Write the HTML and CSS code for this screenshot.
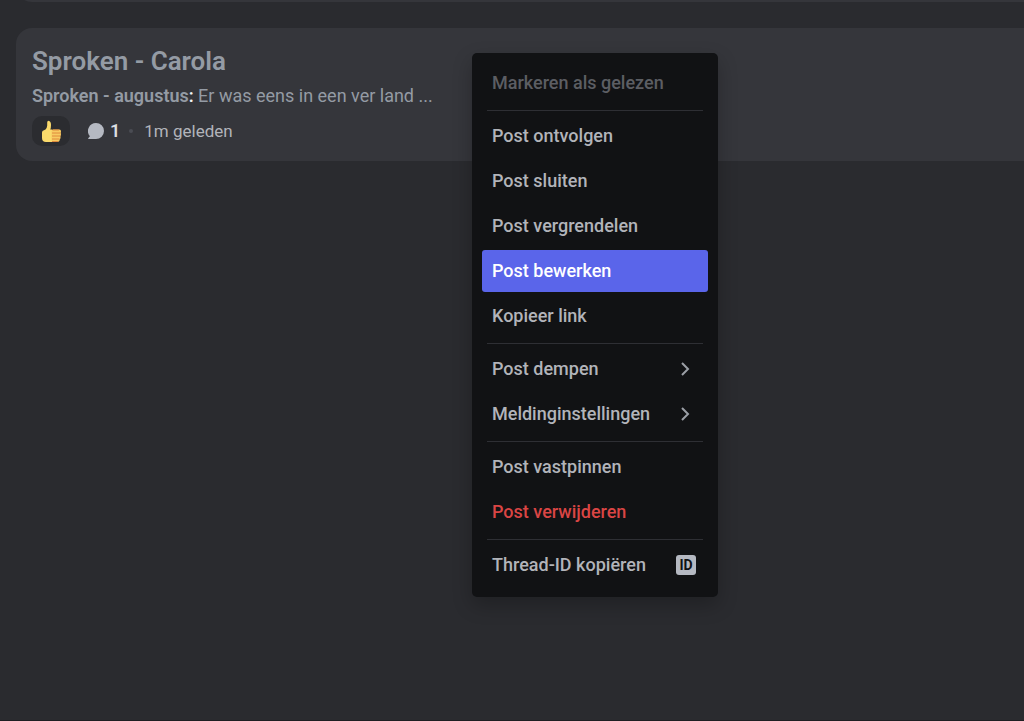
FILE: index.html
```
<!DOCTYPE html>
<html lang="nl">
<head>
  <meta charset="UTF-8">
  <meta name="viewport" content="width=device-width, initial-scale=1.0">
  <title>Sproken</title>
  <link rel="stylesheet" href="styles.css">
</head>
<body>
<main class="post-list">
  <div class="post post-previous"></div>

  <article class="post">
    <h3 class="post-title">Sproken - Carola</h3>
    <p class="post-message"><strong class="author">Sproken - augustus<span class="colon">:</span></strong> Er was eens in een ver land ...</p>
    <div class="post-footer">
      <button class="reaction" type="button" aria-label="Duim omhoog">
        <svg width="22" height="22" viewBox="0 0 22 22" aria-hidden="true">
          <path fill="#fbdb6c" d="M2 12.500 Q2 10.600 4 10.300 L5.500 9.600 Q7 8.200 7.200 5.600 V2.400 Q7.200 .8 8.500 .8 Q11 1.100 11 5 Q11 8 10.300 9.500 H12 V22 H6 Q2 22 2 18z"/>
          <path fill="#f7cb62" d="M13 9.500 H19.500 Q21 9.500 21 11.500 Q21 12.300 20.700 12.800 Q21.300 13.800 20.800 15.300 Q20.800 16 20.400 16.300 Q20.800 17.400 20.300 18.700 L19.800 19.300 Q19.800 22 18 22 H13 Q11.500 22 11.500 20 V11.500 Q11.500 9.500 13 9.500z"/>
          <path fill="none" stroke="#e08a3c" d="M12.500 10 H19 M12 13 H20.500 M12 16 H20.500 M12 19 H19.500 M12 21.500 H18"/>
        </svg>
      </button>
      <span class="replies">
        <svg width="16" height="16" viewBox="0 0 16 16" aria-hidden="true">
          <path fill="#b5b9c2" d="M8 0 A8 8 0 1 1 8 16 H.7 Q-.4 15.800 .4 15 L1.900 13.200 A8 8 0 0 1 8 0z"/>
        </svg>
        <span class="count">1</span>
      </span>
      <span class="dot"></span>
      <time class="ago">1m geleden</time>
    </div>
  </article>
</main>

<div class="menu" role="menu">
  <div class="group" role="group">
    <button class="item" type="button" role="menuitem" disabled>Markeren als gelezen</button>
  </div>
  <hr class="separator">
  <div class="group" role="group">
    <button class="item" type="button" role="menuitem">Post ontvolgen</button>
    <button class="item" type="button" role="menuitem">Post sluiten</button>
    <button class="item" type="button" role="menuitem">Post vergrendelen</button>
    <button class="item item-active" type="button" role="menuitem">Post bewerken</button>
    <button class="item" type="button" role="menuitem">Kopieer link</button>
  </div>
  <hr class="separator">
  <div class="group" role="group">
    <button class="item" type="button" role="menuitem" aria-haspopup="true">
      Post dempen
      <svg class="chevron" width="20" height="20" viewBox="0 0 20 20" aria-hidden="true"><path d="M7 4 L13 10 L7 16"/></svg>
    </button>
    <button class="item" type="button" role="menuitem" aria-haspopup="true">
      Meldinginstellingen
      <svg class="chevron" width="20" height="20" viewBox="0 0 20 20" aria-hidden="true"><path d="M7 4 L13 10 L7 16"/></svg>
    </button>
  </div>
  <hr class="separator">
  <div class="group" role="group">
    <button class="item" type="button" role="menuitem">Post vastpinnen</button>
    <button class="item item-danger" type="button" role="menuitem">Post verwijderen</button>
  </div>
  <hr class="separator">
  <div class="group" role="group">
    <button class="item" type="button" role="menuitem">
      Thread-ID kopiëren
      <span class="id-badge" aria-hidden="true">ID</span>
    </button>
  </div>
</div>
</body>
</html>
```
FILE: styles.css
```
* {
  box-sizing: border-box;
}
body {
  margin: 0;
  min-height: 100vh;
  overflow: hidden;
  font-family: Roboto, sans-serif;
  font-size: 18px;
  line-height: 24px;
  color: #b2b4ba;
  background-color: #2a2b2f;
  border-bottom: 1px solid #1e1f22;
}
button {
  font: inherit;
  color: inherit;
  border: none;
  cursor: pointer;
}
.post-list {
  display: flex;
  flex-direction: column;
  gap: 26px;
  margin: -30px -16px 0 16px;
}
.post {
  padding: 19px 16px 15px;
  border-radius: 16px;
  background-color: #35363b;
}
.post-previous {
  height: 32px;
  padding: 0;
}
.post-title {
  margin: 0;
  font-size: 26px;
  line-height: 28px;
  font-weight: 600;
  color: #949ba4;
}
.post-message {
  margin: 9px 0 8px;
  color: #949ba4;
}
.author {
  font-weight: 600;
}
.colon {
  color: #f2f3f5;
}
.post-footer {
  display: flex;
  align-items: center;
}
.reaction {
  display: flex;
  padding: 4px 8px;
  border-radius: 10px;
  background-color: #2b2c30;
}
.replies {
  display: flex;
  align-items: center;
  gap: 6px;
  margin-left: 18px;
}
.count {
  font-weight: 600;
  color: #dbdee1;
}
.dot {
  width: 4px;
  height: 4px;
  margin: 0 11px 0 9px;
  border-radius: 50%;
  background-color: #4a4c53;
}
.ago {
  font-size: 17px;
}

/* context menu */
.menu {
  position: absolute;
  top: 53px;
  left: 472px;
  width: 246px;
  padding: 9px 10px 11px;
  border-radius: 5px;
  background-color: #111214;
  box-shadow: 0 8px 20px rgba(0,0,0,0.24);
}
.group {
  display: grid;
  gap: 3px;
}
.item {
  display: flex;
  align-items: center;
  justify-content: space-between;
  height: 42px;
  padding: 0 10px;
  border-radius: 3px;
  background-color: transparent;
  font-weight: 500;
  text-align: left;
  white-space: nowrap;
}
.item:disabled {
  color: #5c5e63;
  cursor: default;
}
.item-active,
.item:not(:disabled):hover {
  color: white;
  background-color: #5a65ea;
}
.item-danger {
  color: #da4544;
}
.separator {
  height: 1px;
  margin: 6px 5px 4px;
  border: none;
  background-color: #2e2f34;
}
.chevron {
  margin-right: 3px;
  fill: none;
  stroke: #9b9fa6;
  stroke-width: 2;
}
.id-badge {
  width: 20px;
  height: 20px;
  margin-right: 2px;
  border-radius: 3px;
  background-color: #b5b9c2;
  color: #111214;
  font-size: 14px;
  line-height: 20px;
  font-weight: 700;
  text-align: center;
}
```
